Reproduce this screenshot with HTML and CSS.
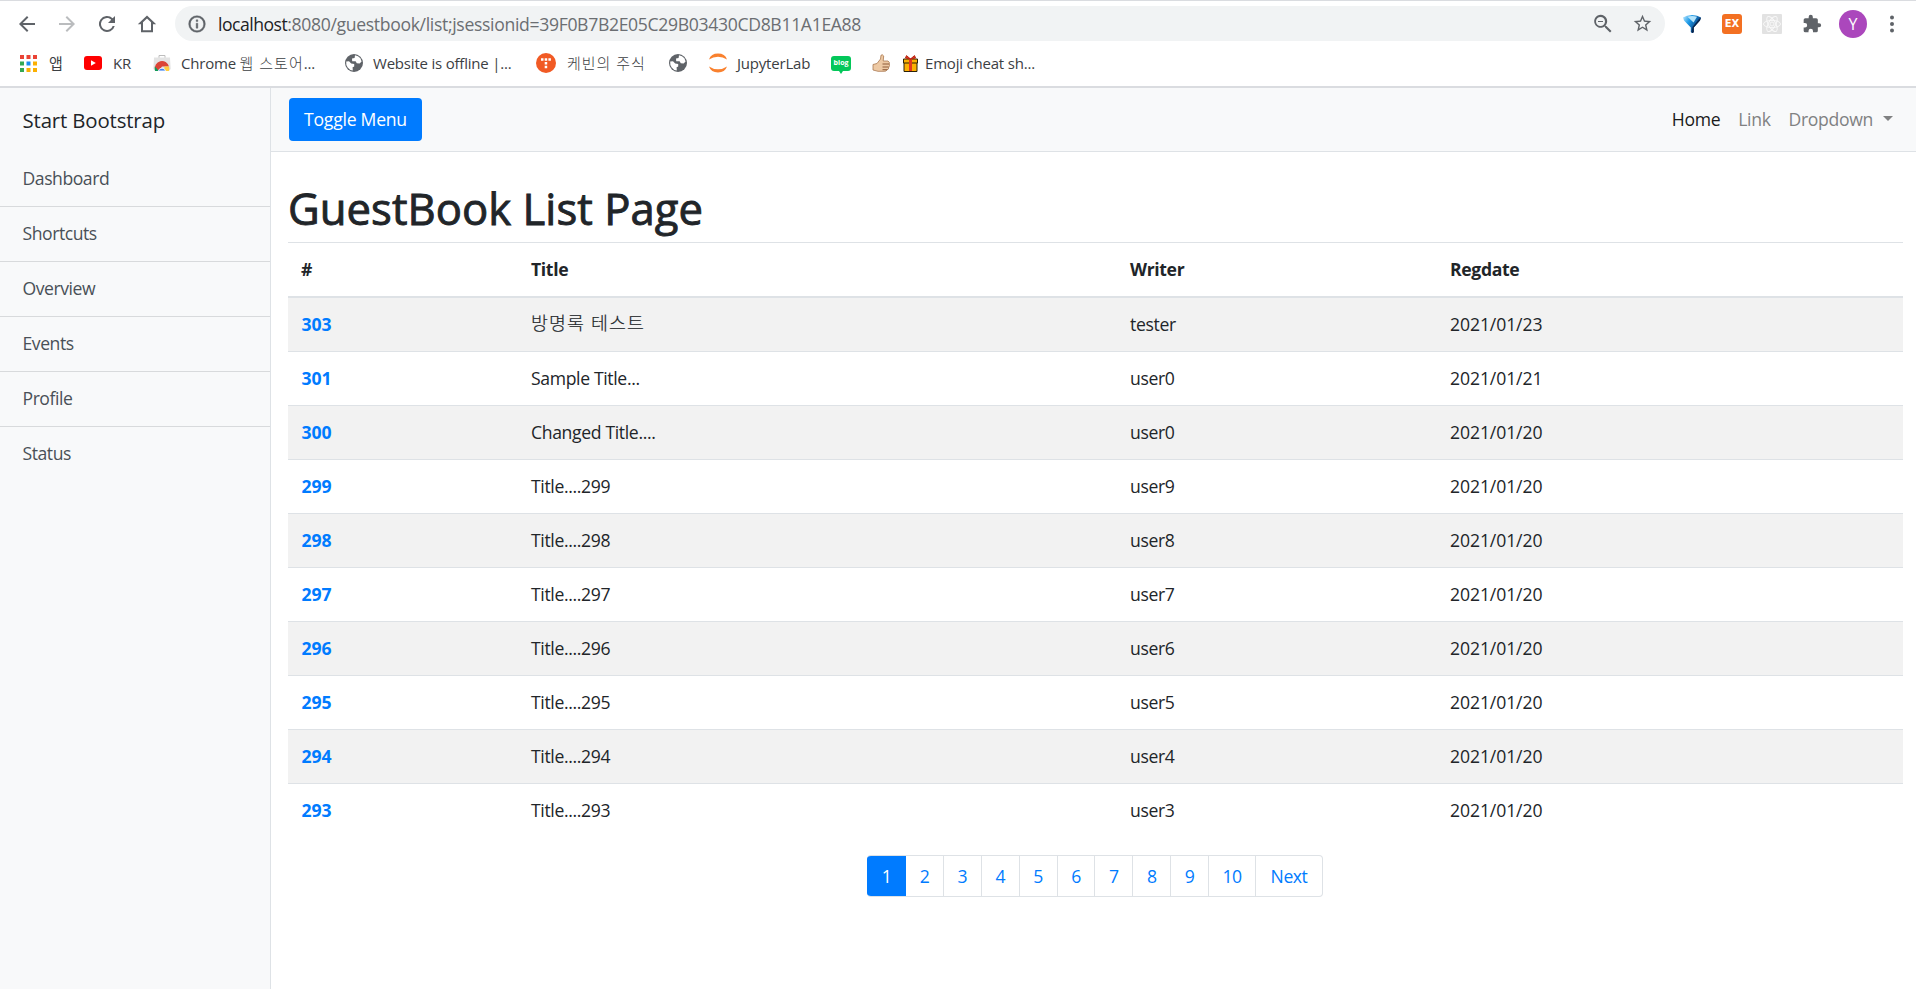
FILE: index.html
```html
<!DOCTYPE html>
<html lang="ko">
<head>
<meta charset="utf-8">
<title>GuestBook List Page</title>
<link rel="stylesheet" href="styles.css">
</head>
<body>
<svg class="defs" width="0" height="0">
  <symbol id="globe" viewBox="0 0 20 20"><circle cx="10" cy="10" r="9" fill="#5f6368"/><path d="M2.2 8.6 5 8.2 7.2 10.6 10.2 10.9 10.2 13.5 8.6 14.3 8.8 17.6A8 8 0 0 1 2.2 8.6Z" fill="#fff"/><path d="M11 2.2A8 8 0 0 1 16.4 5.2L17.6 8.6 15.6 10.4 12.8 10.2 11.6 8.2 8.2 8.2 8 5.6 10.6 5Z" fill="#fff"/><path d="M14 12.6 17 11.6A8 8 0 0 1 13 17Z" fill="#5f6368"/></symbol>
</svg>
<header class="browser">
  <div class="toolbar">
    <svg class="ico back" viewBox="0 0 24 24"><path d="M20 11H7.8l5.6-5.6L12 4l-8 8 8 8 1.4-1.4L7.8 13H20z" fill="#5f6368"/></svg>
    <svg class="ico fwd" viewBox="0 0 24 24"><path d="M4 11h12.2l-5.6-5.6L12 4l8 8-8 8-1.4-1.4 5.6-5.6H4z" fill="#babcbe"/></svg>
    <svg class="ico reload" viewBox="0 0 24 24"><path d="M17.65 6.35A8 8 0 1 0 19.73 14h-2.08A6 6 0 1 1 12 6c1.66 0 3.14.69 4.22 1.78L13 11h7V4z" fill="#5f6368"/></svg>
    <svg class="ico home" viewBox="0 0 24 24"><path d="M12 3.5 2.8 12.2H6V20.2H18V12.2H21.2ZM8 18.2V10.2L12 6.4 16 10.2V18.2Z" fill="#5f6368" fill-rule="evenodd"/></svg>
    <div class="omnibox">
      <svg class="info" viewBox="0 0 24 24"><path d="M11 7h2v2h-2zm0 4h2v6h-2zm1-9a10 10 0 1 0 0 20 10 10 0 0 0 0-20zm0 18a8 8 0 1 1 0-16 8 8 0 0 1 0 16z" fill="#5f6368" stroke="#5f6368" stroke-width=".5"/></svg>
      <span class="url"><b>localhost</b>:8080/guestbook/list;jsessionid=39F0B7B2E05C29B03430CD8B11A1EA88</span>
      <svg class="mag" viewBox="0 0 24 24"><path d="M15.5 14h-.79l-.28-.27A6.5 6.5 0 1 0 13.7 14.4l.3.3v.8l5 5 1.5-1.5zm-6 0a4.5 4.5 0 1 1 0-9 4.5 4.5 0 0 1 0 9zM7 9h5v1H7z" fill="#5f6368"/></svg>
      <svg class="star" viewBox="0 0 24 24"><path d="m22 9.24-7.19-.62L12 2 9.19 8.63 2 9.24l5.46 4.73L5.82 21 12 17.27 18.18 21l-1.63-7.03zM12 15.4l-3.76 2.27 1-4.28-3.32-2.88 4.38-.38L12 6.1l1.71 4.04 4.38.38-3.32 2.88 1 4.28z" fill="#5f6368"/></svg>
    </div>
    <svg class="ext funnel" viewBox="0 0 20 20"><defs><linearGradient id="bl" x1="0" y1="0" x2="1" y2=".6"><stop offset=".1" stop-color="#9bd8fa"/><stop offset=".4" stop-color="#1e9be8"/><stop offset=".9" stop-color="#043d80"/></linearGradient></defs><path d="M1 3.500Q4.500 .9 10 .9T19 3.500L18 6.500 11.800 13.500V18Q10.500 19.800 8.800 18V13.500L2 6.500Z" fill="url(#bl)"/><path d="M19 3.500 18 6.500 11.800 13.500V18Q10.500 19.800 9.500 18L10.500 13 17 5Z" fill="#09264d"/><path d="M5.500 2.800Q10 1 15 2.800L11.500 8.500Z" fill="#b5e4fb"/></svg>
    <span class="ext ex">EX</span>
    <svg class="ext" viewBox="0 0 20 20"><rect width="20" height="20" rx="1" fill="#e2e2e2"/><g fill="none" stroke="#f8f8f8" stroke-width="1"><ellipse cx="10" cy="10" rx="8.5" ry="3.6"/><ellipse cx="10" cy="10" rx="8.5" ry="3.6" transform="rotate(60 10 10)"/><ellipse cx="10" cy="10" rx="8.5" ry="3.6" transform="rotate(120 10 10)"/><circle cx="10" cy="10" r="2"/></g></svg>
    <svg class="ext puzzle" viewBox="0 0 24 24"><path d="M20.5 11H19V7a2 2 0 0 0-2-2h-4V3.500a2.500 2.500 0 0 0-5 0V5H4a2 2 0 0 0-2 2v3.800h1.500a2.700 2.700 0 0 1 0 5.400H2V20a2 2 0 0 0 2 2h3.800v-1.500a2.700 2.700 0 0 1 5.400 0V22H17a2 2 0 0 0 2-2v-4h1.500a2.500 2.500 0 0 0 0-5z" fill="#5f6368"/></svg>
    <span class="avatar">Y</span>
    <svg class="dots" viewBox="0 0 6 20"><g fill="#5f6368"><circle cx="3" cy="3.500" r="2"/><circle cx="3" cy="10" r="2"/><circle cx="3" cy="16.500" r="2"/></g></svg>
  </div>
  <nav class="bookmarks">
    <a class="bm b1"><svg width="17" height="17" viewBox="0 0 17 17"><path d="M0 0h4v4H0zM6.500 0h4v4h-4zM13 0h4v4h-4z" fill="#ea4335"/><path d="M0 6.500h4v4H0zM0 13h4v4H0z" fill="#34a853"/><path d="M6.500 6.500h4v4h-4z" fill="#1a8cf0"/><path d="M13 6.500h4v4h-4zM13 13h4v4h-4zM6.500 13h4v4h-4z" fill="#fbb003"/></svg><span>앱</span></a>
    <a class="bm b2"><svg width="18" height="14" viewBox="0 0 18 14"><rect width="18" height="14" rx="3" fill="#f00"/><path d="M7 4.200 11.800 7 7 9.800z" fill="#fff"/></svg><span>KR</span></a>
    <a class="bm b3"><svg width="18" height="18" viewBox="0 0 18 18"><path d="M6 4V1.500h6V4" fill="none" stroke="#bdbdbd"/><path d="M1 3.500h16l.7 11.500-1.700 2H2L.3 15z" fill="#e3e3e3"/><path d="M2 16A7.200 7.200 0 0 1 16 12.500H9L6 17H2.200z" fill="#db4437"/><path d="M1.800 12.500 6 17H2.200Q1.400 15 1.800 12.500z" fill="#0f9d58"/><path d="M11.500 12.500H16Q16.800 15 15.800 17H11z" fill="#ffcd40"/><path d="M5.400 17a3.700 3.700 0 0 1 7.200 0z" fill="#4285f4" stroke="#fff" stroke-width=".8"/></svg><span>Chrome <i>웹 스토어</i>...</span></a>
    <a class="bm b4"><svg width="20" height="20"><use href="#globe"/></svg><span>Website is offline |...</span></a>
    <a class="bm b5"><svg width="20" height="20" viewBox="0 0 20 20"><circle cx="10" cy="10" r="10" fill="#f15a24"/><path d="M5 5.200h2.500v2.500H5zM8.700 5.200h2.500v2.500H8.700zM12.400 5.200h2.500v2.500h-2.500zM8.700 9h2.500v2.500H8.700zM8.700 12.800h2.500v2.500H8.700z" fill="#fff"/></svg><span><i>케빈의 주식</i></span></a>
    <a class="bm b6"><svg width="20" height="20"><use href="#globe"/></svg></a>
    <a class="bm b7"><svg width="20" height="20" viewBox="0 0 20 20"><path d="M1 6.500Q3 .6 10 .6T19 6.500Q15 3.700 10 3.700T1 6.500zM1 13.500Q3 19.400 10 19.400T19 13.500Q15 16.300 10 16.300T1 13.500z" fill="#f9812e"/></svg><span>JupyterLab</span></a>
    <a class="bm b8"><span class="blog">blog</span></a>
    <a class="bm b9"><svg width="18" height="18" viewBox="0 0 18 18"><path d="M1 10.500 5 9.500 8.500 5 9 1.200Q10.500 0 11.700 2L11.200 7 16 7Q18 8.200 17.300 10 18.200 12 16.800 13 17 15.500 15 15.800 14.500 17.500 12 17.300H6L1 16z" fill="#edc9a4" stroke="#a97850" stroke-width=".8"/><path d="M10.500 10h6.500M10.500 13h6M10.500 15.700h4.800" stroke="#8d5a38" fill="none"/></svg></a>
    <a class="bm b10"><svg width="15" height="17" viewBox="0 0 15 17"><path d="M1 7h13v9.500H1z" fill="#fbb003" stroke="#2b2108"/><path d="M.5 4h14v4H.5z" fill="#fbb003" stroke="#2b2108"/><path d="M6 4h3v12H6z" fill="#e23a20"/><path d="M7.500 4 2.500 3 3.500.6zM7.500 4l5-1-1-2.400z" fill="#e23a20" stroke="#b82312"/></svg><span>Emoji cheat sh...</span></a>
  </nav>
</header>
<div class="wrapper">
  <aside class="sidebar">
    <div class="brand"><span>Start Bootstrap</span></div>
    <a>Dashboard</a><a>Shortcuts</a><a>Overview</a><a>Events</a><a>Profile</a><a>Status</a>
  </aside>
  <div class="page">
    <nav class="navbar">
      <button class="toggle">Toggle Menu</button>
      <div class="links"><a class="active">Home</a><a>Link</a><a class="drop">Dropdown</a></div>
    </nav>
    <main class="content">
      <h1>GuestBook List Page</h1>
      <table>
        <colgroup><col class="c1"><col class="c2"><col class="c3"><col></colgroup>
        <thead><tr><th>#</th><th>Title</th><th>Writer</th><th>Regdate</th></tr></thead>
        <tbody>
          <tr><th>303</th><td class="ko">방명록 테스트</td><td>tester</td><td>2021/01/23</td></tr>
          <tr><th>301</th><td>Sample Title...</td><td>user0</td><td>2021/01/21</td></tr>
          <tr><th>300</th><td>Changed Title....</td><td>user0</td><td>2021/01/20</td></tr>
          <tr><th>299</th><td>Title....299</td><td>user9</td><td>2021/01/20</td></tr>
          <tr><th>298</th><td>Title....298</td><td>user8</td><td>2021/01/20</td></tr>
          <tr><th>297</th><td>Title....297</td><td>user7</td><td>2021/01/20</td></tr>
          <tr><th>296</th><td>Title....296</td><td>user6</td><td>2021/01/20</td></tr>
          <tr><th>295</th><td>Title....295</td><td>user5</td><td>2021/01/20</td></tr>
          <tr><th>294</th><td>Title....294</td><td>user4</td><td>2021/01/20</td></tr>
          <tr><th>293</th><td>Title....293</td><td>user3</td><td>2021/01/20</td></tr>
        </tbody>
      </table>
      <div class="pagination"><a class="current">1</a><a>2</a><a>3</a><a>4</a><a>5</a><a>6</a><a>7</a><a>8</a><a>9</a><a class="ten">10</a><a class="next">Next</a></div>
    </main>
  </div>
</div>
</body>
</html>
```
FILE: styles.css
```css
* { box-sizing: border-box; }
body {
  margin: 0;
  height: 989px;
  overflow: hidden;
  display: flex;
  flex-direction: column;
  background: #fff;
  color: #212529;
  font: 17.6px/26px "Open Sans", "Noto Sans CJK KR", sans-serif;
  letter-spacing: -0.45px;
}
.defs { display: none; }
svg { display: block; flex: none; }

.browser { height: 88px; border-top: 1px solid #dadce0; border-bottom: 2px solid #dadce0; }
.toolbar { height: 45px; display: flex; align-items: center; padding-left: 15px; }
.ico { width: 24px; height: 24px; margin-right: 16px; }
.omnibox { width: 1490px; height: 35px; border-radius: 18px; background: #f1f3f4; display: flex; align-items: center; padding: 0 12px 0 12px; }
.info { width: 20px; height: 20px; }
.url { margin-left: 11px; color: #6b6e72; font-size: 17.6px; letter-spacing: -0.33px; white-space: nowrap; }
.url b { font-weight: 400; color: #202124; letter-spacing: -0.5px; }
.mag { width: 24px; height: 24px; margin-left: auto; }
.star { width: 21px; height: 21px; margin-left: 17px; }
.ext { width: 20px; height: 20px; margin-left: 20px; }
.funnel { margin-left: 17px; }
.ex { border-radius: 3px; background: #f37022; color: #fff; font: 700 10px/20px "DejaVu Sans", sans-serif; letter-spacing: 0; text-align: center; }
.avatar { width: 28px; height: 28px; margin-left: 17px; border-radius: 50%; background: #ab47bc; color: #fff; font-size: 16px; line-height: 28px; text-align: center; letter-spacing: 0; }
.dots { width: 6px; height: 20px; margin-left: 22px; }

.bookmarks { height: 34px; display: flex; align-items: center; padding-left: 20px; font-size: 15px; line-height: 24px; letter-spacing: -0.2px; color: #3c4043; }
.bm { display: flex; align-items: center; white-space: nowrap; flex: none; }
.bm i { font-style: normal; font-weight: 300; letter-spacing: 1px; }
.b1 { width: 64px; gap: 12px; }
.b2 { width: 69px; gap: 11px; }
.b3 { width: 191px; gap: 10px; }
.b4 { width: 192px; gap: 9px; }
.b5 { width: 132px; gap: 11px; }
.b6 { width: 40px; }
.b7 { width: 123px; gap: 9px; }
.b8 { width: 41px; }
.b9 { width: 31px; }
.b10 { gap: 7px; }
.blog { position: relative; width: 20px; height: 15px; border-radius: 3px; background: #03c75a; color: #fff; font: 700 7px/14px "Open Sans", sans-serif; letter-spacing: 0; text-align: center; }
.blog::after { content: ""; position: absolute; left: 8px; top: 15px; border: 2px solid transparent; border-top: 3px solid #03c75a; }

.wrapper { flex: 1; display: flex; }
.sidebar { width: 271px; border-right: 1px solid #dee2e6; background: #f8f9fa; }
.brand { height: 64px; padding: 19px 0 0 22.5px; font-size: 20.4px; letter-spacing: -0.15px; }
.sidebar a { display: block; height: 55px; padding: 13px 22.5px; border-bottom: 1px solid #d8dadc; color: #495057; }
.sidebar a:last-child { border-bottom: 0; }
.page { flex: 1; }
.navbar { height: 64px; display: flex; align-items: center; justify-content: space-between; padding: 0 23px 0 18px; border-bottom: 1px solid #dee2e6; background: #f8f9fa; }
.toggle { width: 133px; height: 43px; padding: 0 0 1px; border: 0; border-radius: 4px; background: #007bff; color: #fff; font: inherit; letter-spacing: -0.25px; }
.links { display: flex; gap: 18px; padding-bottom: 2px; color: #808182; letter-spacing: -0.33px; }
.links .active { color: #1a1a1a; }
.drop { display: flex; align-items: center; gap: 10px; }
.drop::after { content: ""; border: 5px solid transparent; border-top-color: #808182; border-bottom: 0; }

.content { padding: 26px 13px 0 17px; }
h1 { height: 64px; margin: 0; font-size: 43.6px; line-height: 60px; font-weight: 500; letter-spacing: 0.05px; -webkit-text-stroke: 0.9px #212529; }
table { width: 1615px; border-collapse: separate; border-spacing: 0; table-layout: fixed; letter-spacing: -0.35px; }
.c1 { width: 230px; }
.c2 { width: 599px; }
.c3 { width: 320px; }
th, td { height: 54px; padding: 0 13px 1px; border-top: 1px solid #dee2e6; text-align: left; }
td:last-child, tbody th { letter-spacing: -0.1px; }
tbody th { padding-left: 13.5px; }
thead th { height: 56px; border-bottom: 2px solid #dee2e6; }
tbody tr:first-child > * { height: 53px; border-top: 0; }
tbody tr:nth-child(odd) { background: #f2f2f2; }
tbody th { color: #007bff; }
tbody .ko { padding-bottom: 3px; font-weight: 300; font-size: 18.4px; letter-spacing: 1.1px; -webkit-text-stroke: 0.2px #212529; }
.pagination { display: flex; width: 456px; height: 42px; margin: 18px 0 0 579px; border: 1px solid #dee2e6; border-left: 0; border-radius: 4px; overflow: hidden; color: #007bff; line-height: 40px; text-align: center; }
.pagination a { flex: 1; border-left: 1px solid #dee2e6; }
.pagination .current { flex: 0 0 39px; margin: -1px 0; border: 0; background: #007bff; color: #fff; line-height: 42px; }
.pagination .current + a { border-left: 0; }
.pagination .ten { flex: 0 0 47px; }
.pagination .next { flex: 0 0 67px; }
```
